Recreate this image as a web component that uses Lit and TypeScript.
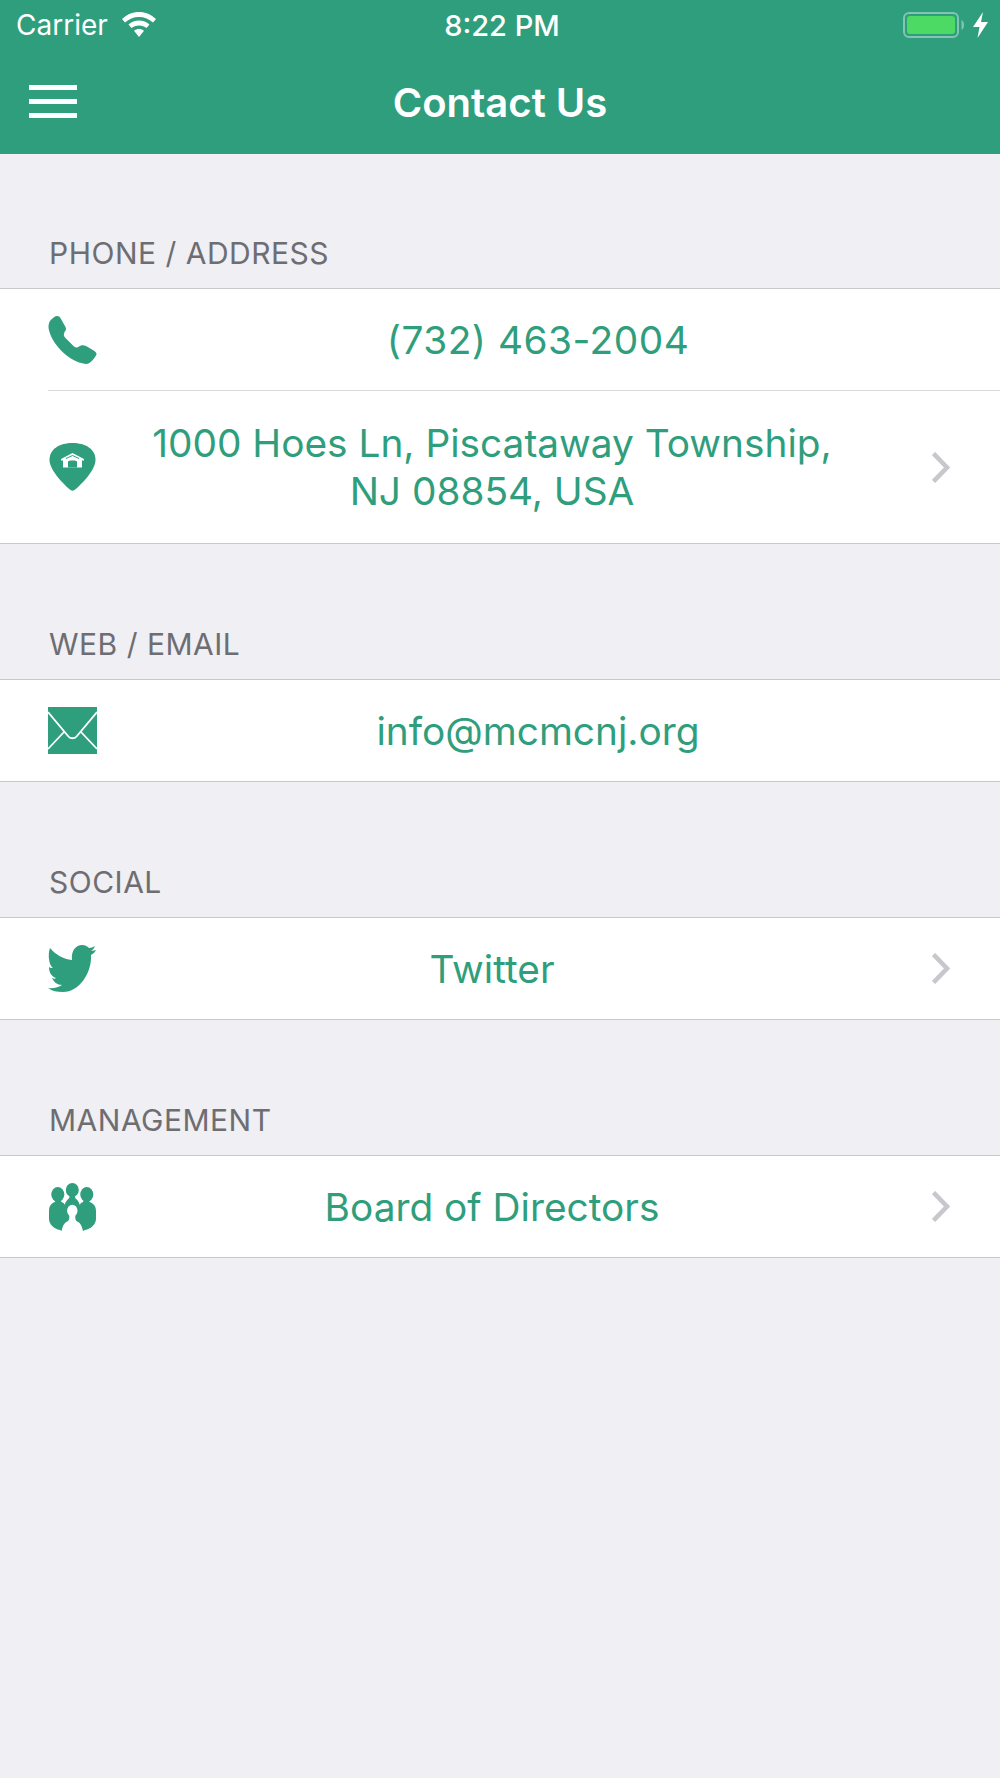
import { LitElement, html, css, svg } from "lit";
import { customElement } from "lit/decorators.js";

const phoneIcon = svg`<svg class="icon" viewBox="0 0 49 48"><path d="M2 5C4.500 2 7 0 9 0C11 0 12 1 13 3L17.500 11C18.500 13 18 14.500 16.500 16L16 18C15.500 19 16 20 17 21.500L26 30.500C27.500 31.500 28.500 32 30 31L33 29.500C34.500 29 36 29 38 30L46.500 35C48.500 36.500 49 38 48 39.500C46 43 42 48 38 48C28 47 17 40 10 31C4 24 .5 15 .5 11C.5 8.500 1 6.500 2 5Z"/></svg>`;

const pinIcon = svg`<svg class="icon" viewBox="0 0 49 48">
  <path d="M24.500 0C37.500 0 47.500 6 47.500 17C47.500 27 33 42 26.500 47C25 48 24 48 22.500 47C16 42 1.500 27 1.500 17C1.500 6 11.500 0 24.500 0Z"/>
  <path fill="#fff" d="M24.500 10L36 16V17.500H34V24.500H15V17.500H13V16Z"/>
  <path d="M20 24.500V18.500C20 17 29 17 29 18.500V24.500Z"/>
  <path fill="none" stroke="#2f9e7c" d="M18 15.500L24.500 12.500L31 15.500"/>
</svg>`;

const mailIcon = svg`<svg class="icon" viewBox="0 0 49 47"><rect width="49" height="47"/><path fill="none" stroke="#fff" stroke-width="1.800" d="M0 5L20 29C22 32 27 32 29 29L49 5M0 42L16 25M49 42L33 25"/></svg>`;

const twitterIcon = svg`<svg class="icon" viewBox="0 0 49 48"><path d="M2 3C8 10 15 14 24 15C23 7 27 0 34 0C37 0 39 1 41 3C43 3 45 2 47 1C46 3 45 5 43 6C45 6 47 5 48 5C47 7 45 9 43 10C44 27 32 47 15 47C9 47 4 46 0 43C5 44 11 42 14 40C9 40 6 37 4 33C6 34 7 34 8 33C3 31 1 27 1 22C2 23 4 23 5 23C1 20 -.5 10 2 3Z"/></svg>`;

const boardIcon = svg`<svg class="icon" viewBox="0 0 49 48">
  <ellipse cx="9.800" cy="11.500" rx="6.500" ry="7.500"/>
  <ellipse cx="24.300" cy="7" rx="6.500" ry="7"/>
  <ellipse cx="38.800" cy="11.500" rx="6.500" ry="7.500"/>
  <path d="M1 28C1 23 3 20.500 7 19L8 17H12.500L13.500 19C15 19.500 16 20 16.800 22C17 20 19 16.500 21 15.500L22 12H26.500L27.500 15.500C29.500 16.500 31.500 20 31.800 22C32.600 20 33.500 19.500 35 19L36 17H40.500L41.500 19C45.500 20.500 48 23 48 28V36C48 41 43 46 37 47L35 48H13.500L12 47C6 46 1 41 1 36Z"/>
  <ellipse cx="24.300" cy="27.700" rx="5.200" ry="6" fill="#fff"/>
  <path fill="#fff" d="M21.300 32V35.500C21 37.500 19.500 38.500 17.500 39.500C15.500 41 14.500 44 13.500 48H35C34 44 33 41 31 39.500C29 38.500 27.500 37.500 27.300 35.500V32Z"/>
</svg>`;

const chevron = svg`<svg class="chevron" viewBox="0 0 18 31"><path fill="none" stroke="#c7c7cc" stroke-width="4.500" d="M1.500 1.500L15 15.500L1.500 29.500"/></svg>`;

@customElement("app-root")
export class AppRoot extends LitElement {
  static styles = css`
    :host {
      display: block;
      width: 1000px;
      height: 1778px;
      background: #efeff4;
      font-family: Inter, "Liberation Sans", sans-serif;
      overflow: hidden;
    }
    .top {
      height: 154px;
      background: #2f9e7c;
      color: #fff;
      display: flex;
      flex-direction: column;
    }
    .status {
      height: 50px;
      display: grid;
      grid-template-columns: 1fr auto 1fr;
      align-items: center;
      padding: 0 12px 0 16px;
      font-size: 28px;
    }
    .status-left,
    .status-right {
      display: flex;
      align-items: center;
    }
    .status-left { gap: 14px; }
    .status-right { justify-content: flex-end; gap: 8px; }
    .time { font-size: 29px; font-weight: 500; }
    .wifi { margin-top: -2px; }
    .nav {
      flex: 1;
      display: grid;
      grid-template-columns: 1fr auto 1fr;
      align-items: center;
      padding-left: 29px;
    }
    .burger {
      width: 48px;
      margin-top: -1px;
      display: flex;
      flex-direction: column;
      gap: 9px;
    }
    .burger span {
      height: 5px;
      background: #fff;
    }
    .title {
      font-size: 40px;
      font-weight: 600;
      margin-left: -29px;
    }
    .label {
      height: 135px;
      box-sizing: border-box;
      display: flex;
      align-items: flex-end;
      padding: 0 0 17px 49px;
      font-size: 30px;
      line-height: 36px;
      letter-spacing: .5px;
      color: #6d6d72;
    }
    .label.first { height: 134px; }
    .list {
      background: #fff;
      border-top: 1px solid #c8c7cc;
      border-bottom: 1px solid #c8c7cc;
    }
    .row {
      display: flex;
      align-items: center;
      height: 101px;
      padding-left: 48px;
    }
    .row.tall { height: 152px; }
    .sep {
      height: 1px;
      margin-left: 48px;
      background: #d9d9dc;
    }
    .icon {
      width: 49px;
      flex: none;
      fill: #2f9e7c;
    }
    .text {
      flex: 1;
      text-align: center;
      font-size: 38.800px;
      line-height: 48px;
      color: #2f9e7c;
      white-space: nowrap;
    }
    .num { letter-spacing: .5px; }
    .end {
      flex: none;
      width: 21px;
    }
    .end.more {
      width: 113px;
      box-sizing: border-box;
      padding-left: 45px;
      display: flex;
      align-items: center;
    }
    .chevron { width: 18px; height: 31px; }
  `;

  private row(icon: unknown, text: unknown, more = false, tall = false) {
    return html`<div class="row ${tall ? "tall" : ""}">
      ${icon}
      <div class="text">${text}</div>
      <div class="end ${more ? "more" : ""}">${more ? chevron : ""}</div>
    </div>`;
  }

  render() {
    return html`
      <div class="top">
        <div class="status">
          <div class="status-left">
            <span>Carrier</span>
            <svg class="wifi" width="34" height="25" viewBox="0 0 34 25" fill="#fff">
              <path d="M17 0C10.500 0 5 2.500 0 7L3 10.500C7 7 11.500 5 17 5C22.500 5 27 7 31 10.500L34 7C29 2.500 23.500 0 17 0Z"/>
              <path d="M17 8.500C13 8.500 9.500 10 6.500 12.500L9.500 16C11.500 14.500 14 13.500 17 13.500C20 13.500 22.500 14.500 24.500 16L27.500 12.500C24.500 10 21 8.500 17 8.500Z"/>
              <path d="M17 17C15 17 13.500 17.500 12 18.800L17 25L22 18.800C20.500 17.500 19 17 17 17Z"/>
            </svg>
          </div>
          <div class="time">8:22 PM</div>
          <div class="status-right">
            <svg width="62" height="26" viewBox="0 0 62 26">
              <rect x="1" y="1" width="54" height="24" rx="5" fill="none" stroke="#fff" stroke-opacity=".4" stroke-width="2"/>
              <rect x="4" y="4" width="48" height="18" rx="3" fill="#4cd964"/>
              <path d="M58.500 8C60.500 9 61 11 61 13C61 15 60.500 17 58.500 18Z" fill="#fff" fill-opacity=".4"/>
            </svg>
            <svg width="15" height="26" viewBox="0 0 15 26" fill="#fff">
              <path d="M10 0L0 15H6.500L4.500 26L15 10H8Z"/>
            </svg>
          </div>
        </div>
        <div class="nav">
          <div class="burger"><span></span><span></span><span></span></div>
          <div class="title">Contact Us</div>
          <div></div>
        </div>
      </div>

      <div class="label first">PHONE / ADDRESS</div>
      <div class="list">
        ${this.row(phoneIcon, html`<span class="num">(732) 463-2004</span>`)}
        <div class="sep"></div>
        ${this.row(pinIcon, html`1000 Hoes Ln, Piscataway Township,<br />NJ 08854, USA`, true, true)}
      </div>

      <div class="label">WEB / EMAIL</div>
      <div class="list">${this.row(mailIcon, "info@mcmcnj.org")}</div>

      <div class="label">SOCIAL</div>
      <div class="list">${this.row(twitterIcon, "Twitter", true)}</div>

      <div class="label">MANAGEMENT</div>
      <div class="list">${this.row(boardIcon, "Board of Directors", true)}</div>
    `;
  }
}
